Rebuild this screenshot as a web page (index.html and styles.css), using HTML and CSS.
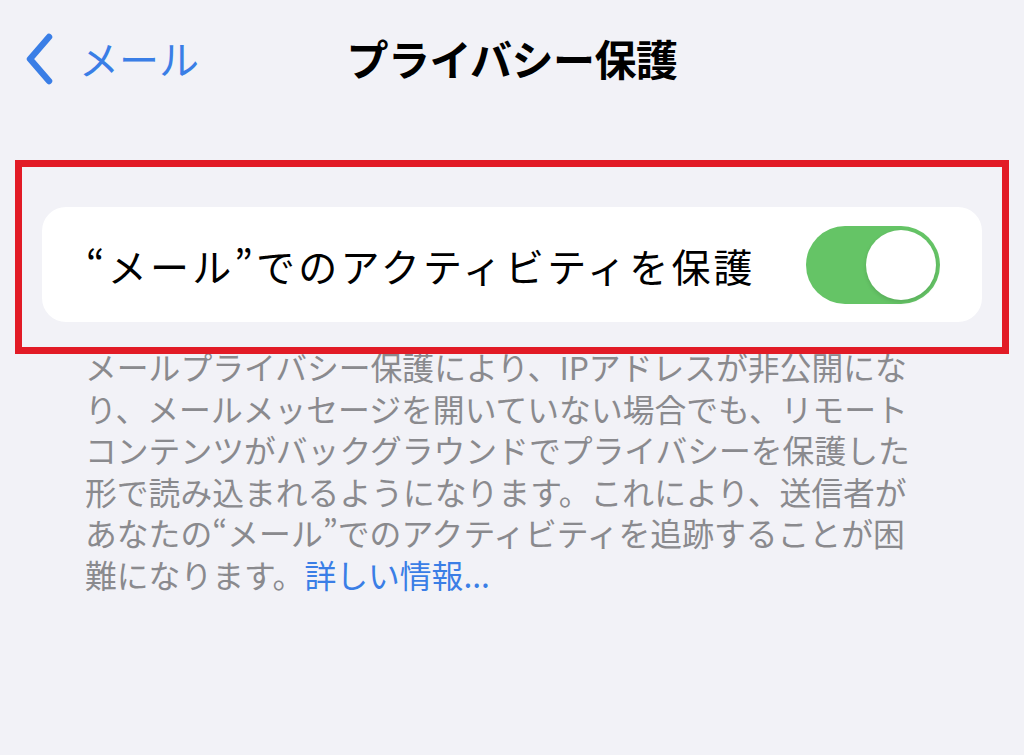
FILE: index.html
```html
<!DOCTYPE html>
<html lang="ja">
<head>
    <meta charset="UTF-8">
    <meta name="viewport" content="width=device-width, initial-scale=1.0">
    <title>プライバシー保護</title>
    <link rel="stylesheet" href="styles.css">
</head>
<body>
    <div class="nav">
        <a class="back" href="#">
            <svg class="chevron" width="30" height="52" viewBox="0 0 30 52">
                <path d="M25 4 L6 26 L25 48" fill="none" stroke="#3a7ee6" stroke-width="6.5" stroke-linecap="round" stroke-linejoin="round"/>
            </svg>
            <span>メール</span>
        </a>
        <h1 class="title">プライバシー保護</h1>
        <div></div>
    </div>

    <div class="section">
        <div class="card">
            <span class="label">“メール”でのアクティビティを保護</span>
            <div class="toggle"><div class="knob"></div></div>
        </div>
        <div class="highlight"></div>
    </div>

    <p class="footer">
        メールプライバシー保護により、IPアドレスが非公開にな<br>
        り、メールメッセージを開いていない場合でも、リモート<br>
        コンテンツがバックグラウンドでプライバシーを保護した<br>
        形で読み込まれるようになります。これにより、送信者が<br>
        あなたの“メール”でのアクティビティを追跡することが困<br>
        難になります。<a href="#">詳しい情報...</a>
    </p>
</body>
</html>
```

FILE: styles.css
```css
body {
    margin: 0;
    background-color: #f2f2f7;
    font-family: "Noto Sans CJK JP", "Noto Sans", sans-serif;
    color: #000000;
}
.nav {
    display: grid;
    grid-template-columns: 1fr auto 1fr;
    align-items: center;
    height: 116px;
}
.back {
    display: flex;
    align-items: center;
    gap: 25px;
    padding-left: 24px;
    color: #3a7ee6;
    text-decoration: none;
    font-size: 40px;
    line-height: 1;
}
.chevron {
    display: block;
    margin-top: 2px;
}
.title {
    margin: 0;
    font-size: 42px;
    font-weight: 700;
    line-height: 1;
    letter-spacing: -0.5px;
}
.section {
    position: relative;
    margin: 91px 42px 0 42px;
}
.card {
    display: flex;
    align-items: center;
    justify-content: space-between;
    height: 115px;
    padding: 0 42px 0 44px;
    background-color: #ffffff;
    border-radius: 24px;
}
.label {
    font-size: 39px;
    letter-spacing: 3.2px;
    line-height: 1;
    margin-top: 2px;
}
.toggle {
    display: flex;
    justify-content: flex-end;
    align-items: center;
    width: 134px;
    height: 78px;
    padding: 0 4px;
    box-sizing: border-box;
    border-radius: 39px;
    background-color: #65c466;
}
.knob {
    width: 70px;
    height: 70px;
    border-radius: 50%;
    background-color: #ffffff;
    box-shadow: 0 2px 4px rgba(0, 0, 0, 0.12);
}
.highlight {
    position: absolute;
    top: -47px;
    left: -27px;
    right: -27px;
    bottom: -32px;
    border: 7px solid #e21b26;
}
.footer {
    margin: 24px 0 0 0;
    padding: 0 40px 0 85px;
    font-size: 31.8px;
    line-height: 41.6px;
    color: #8a8a8e;
}
.footer a {
    color: #3a7ee6;
    text-decoration: none;
}
```
